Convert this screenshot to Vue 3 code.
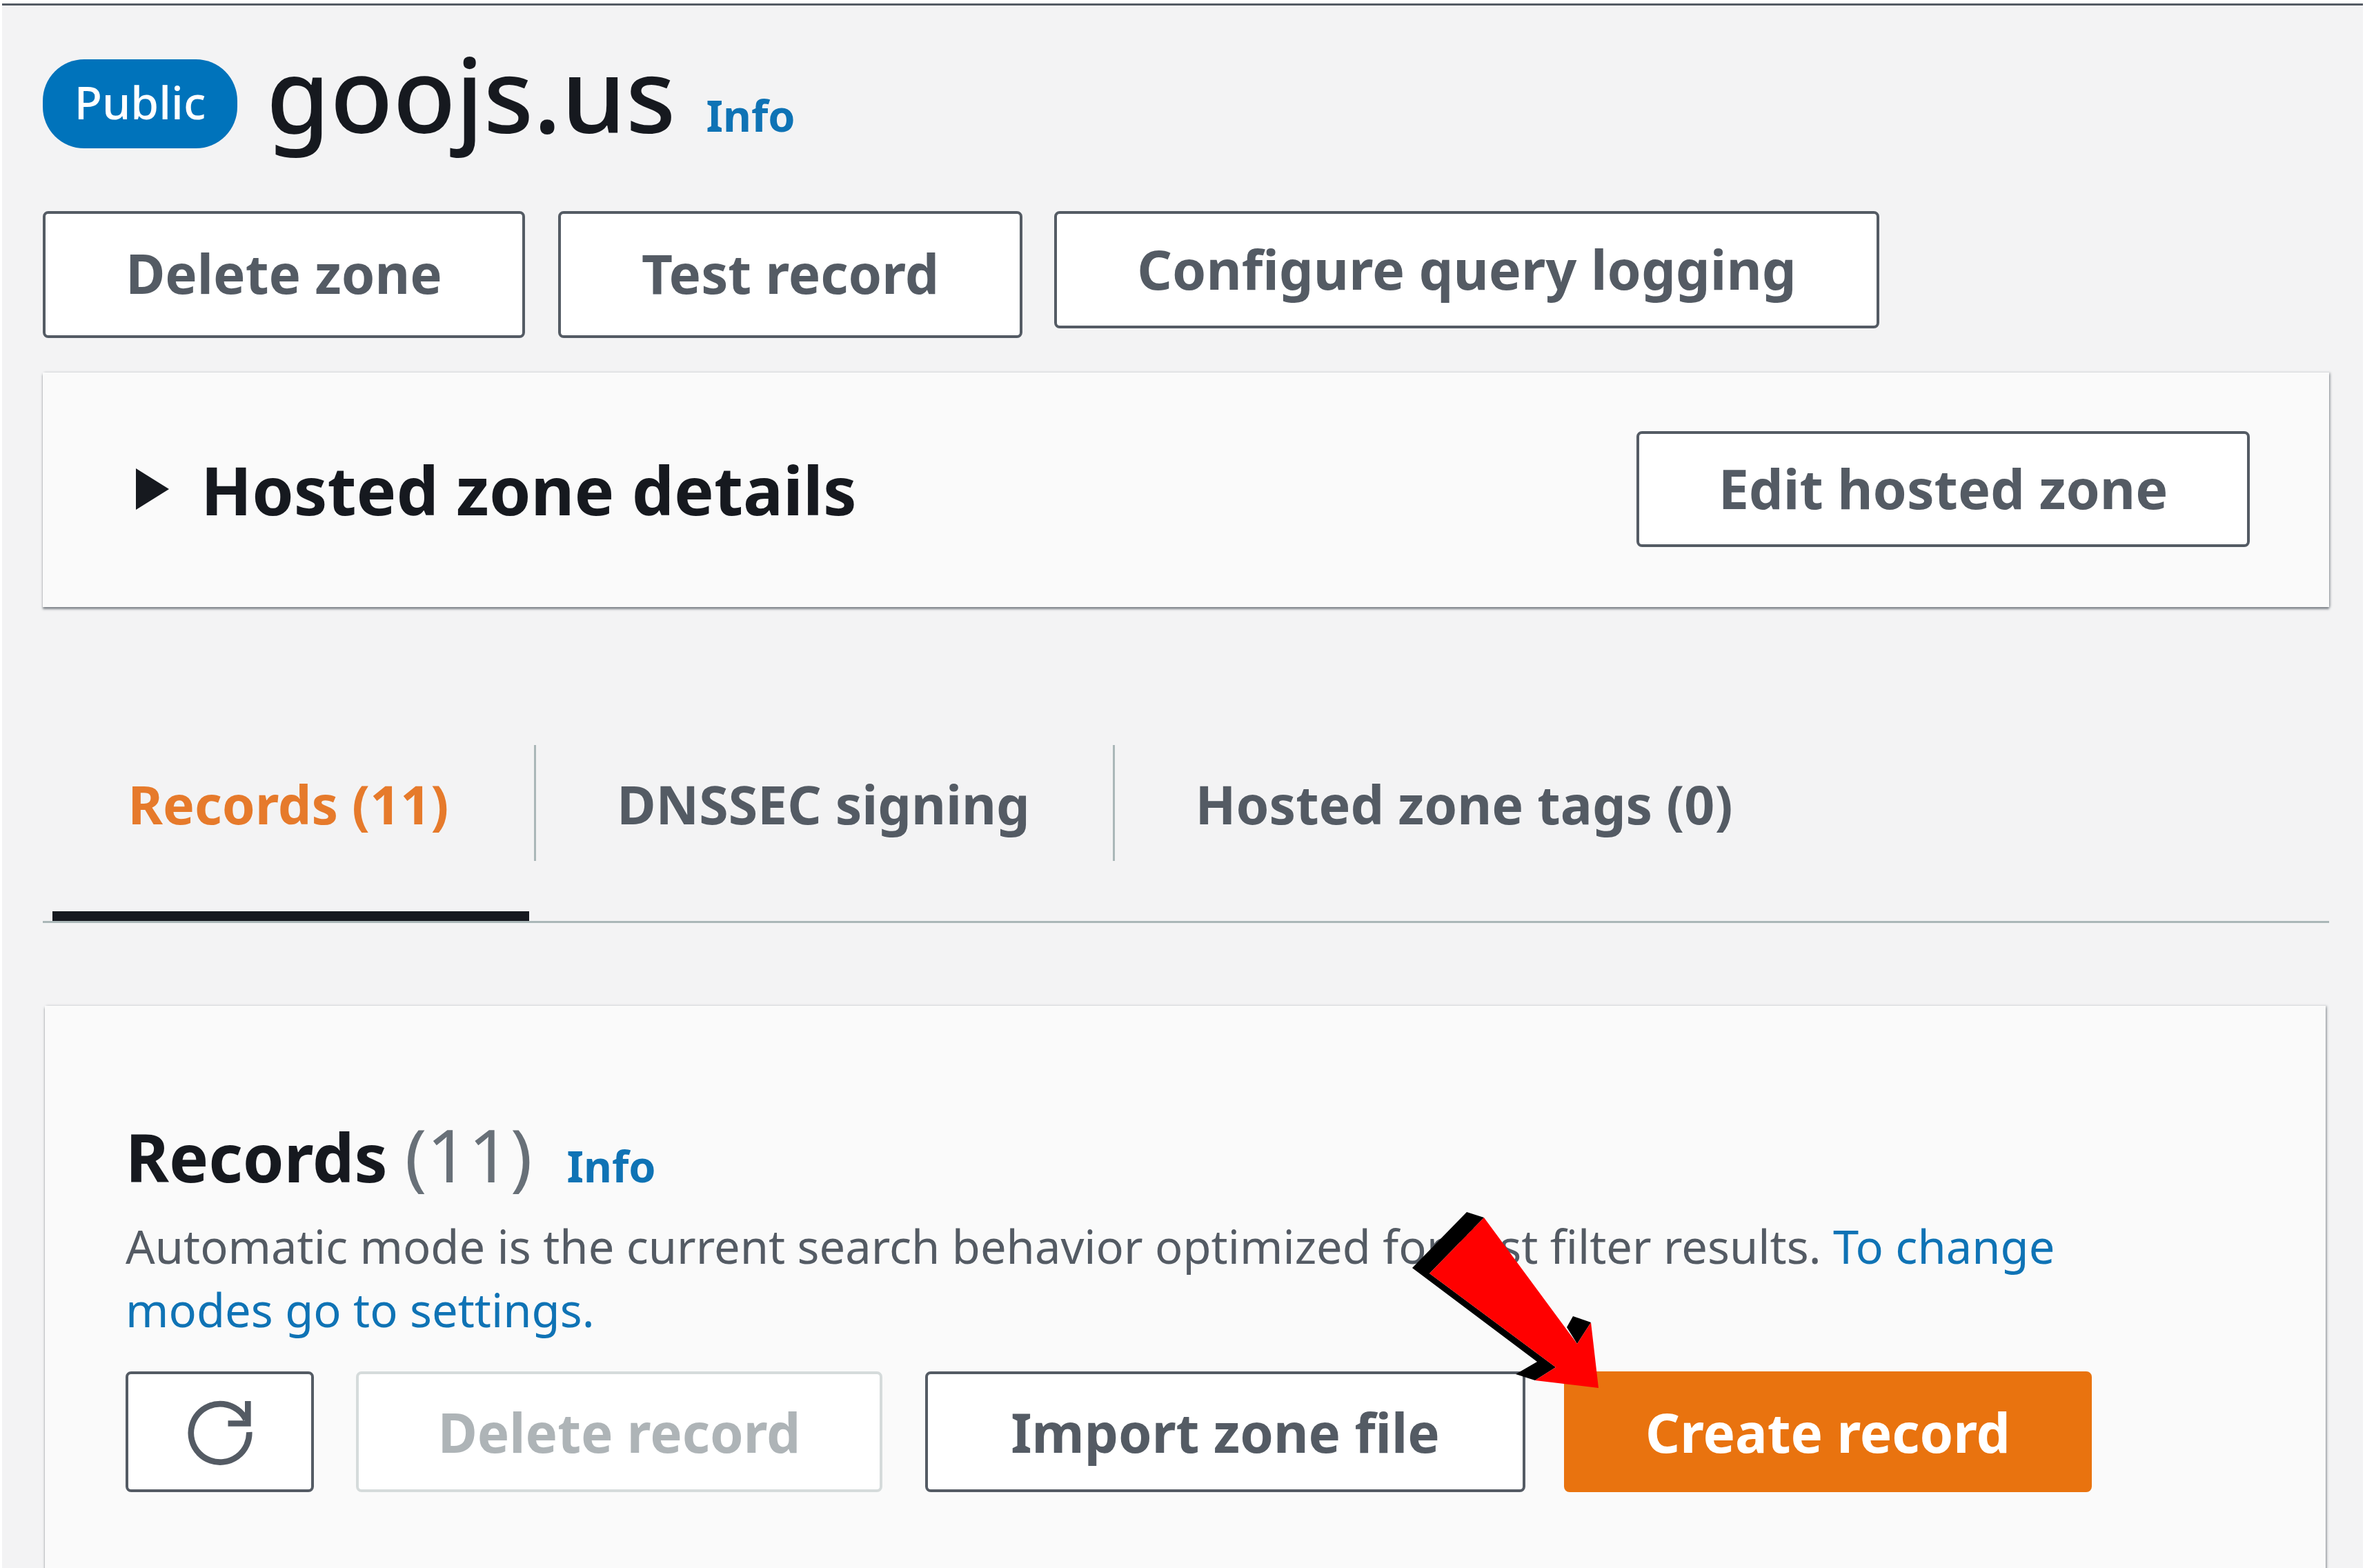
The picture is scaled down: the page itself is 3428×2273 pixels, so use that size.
<script setup>
const tabs = [
  { label: 'Records (11)', active: true },
  { label: 'DNSSEC signing' },
  { label: 'Hosted zone tags (0)' }
]
</script>

<template>
  <main class="page">
    <header class="head">
      <span class="badge">Public</span>
      <h1>goojs.us</h1>
      <a class="info info-top">Info</a>
    </header>

    <div class="zone-actions">
      <button class="btn btn-delete-zone">Delete zone</button>
      <button class="btn btn-test">Test record</button>
      <button class="btn btn-logging">Configure query logging</button>
    </div>

    <section class="card details">
      <div class="details-title">
        <span class="caret"></span>
        <h2>Hosted zone details</h2>
      </div>
      <button class="btn btn-edit">Edit hosted zone</button>
    </section>

    <nav class="tabs">
      <div v-for="tab in tabs" :key="tab.label" :class="['tab', { active: tab.active }]">
        <span class="tab-label">{{ tab.label }}</span>
      </div>
    </nav>

    <section class="card records">
      <div class="records-title">
        <h2>Records <span class="count">(11)</span></h2>
        <a class="info info-records">Info</a>
      </div>
      <p class="desc">
        Automatic mode is the current search behavior optimized for fast filter results.
        <a>To change modes go to settings.</a>
      </p>
      <div class="record-actions">
        <button class="btn btn-refresh" aria-label="Refresh">
          <svg viewBox="0 0 100 100" width="96" height="96">
            <path d="M89 31A44 44 0 1 0 94 50" fill="none" stroke="#545b64" stroke-width="9" />
            <path d="M92 3V37H62" fill="none" stroke="#545b64" stroke-width="9" />
          </svg>
        </button>
        <button class="btn btn-disabled">Delete record</button>
        <button class="btn btn-import">Import zone file</button>
        <button class="btn btn-primary">Create record</button>
      </div>
    </section>

    <svg class="arrow" viewBox="0 0 3428 2273" width="3428" height="2273">
      <polygon points="2126,1757 2151,1765 2072,1846 2255,1982 2225,2001 2197,1992 2228,1974 2047,1838" fill="#000" />
      <polygon points="2280,1908 2306,1917 2286,1948 2271,1924" fill="#000" />
      <polygon points="2151,1765 2286,1948 2306,1917 2317,2012 2225,2001 2255,1982 2072,1846" fill="#f00" />
    </svg>
  </main>
</template>

<style>
html, body {
  margin: 0;
  background: #fff;
}
</style>

<style scoped>
.page {
  position: relative;
  box-sizing: border-box;
  height: 2268px;
  overflow: hidden;
  margin: 5px 3px 0;
  padding: 78px 49px 0 59px;
  background: #f3f3f4;
  border-top: 3px solid #545b64;
  font-family: "Noto Sans", "Open Sans", sans-serif;
  color: #16191f;
}

h1, h2, p {
  margin: 0;
}

a {
  color: #0f73b5;
}

.head {
  display: flex;
  align-items: center;
  height: 129px;
}

.badge {
  display: flex;
  align-items: center;
  justify-content: center;
  width: 282px;
  height: 129px;
  padding-bottom: 8px;
  box-sizing: border-box;
  border-radius: 60px;
  background: #0073bb;
  color: #fff;
  font-size: 66px;
  font-weight: 500;
}

h1 {
  margin-left: 42px;
  padding-bottom: 30px;
  font-size: 149px;
  font-weight: 500;
  line-height: 129px;
}

.info {
  font-weight: 700;
  font-size: 63px;
}

.info-top {
  margin: 32px 0 0 44px;
}

.zone-actions {
  display: flex;
  align-items: flex-start;
  gap: 48px;
  margin-top: 91px;
}

.btn {
  box-sizing: border-box;
  display: flex;
  align-items: center;
  justify-content: center;
  padding: 0 0 4px;
  background: #fff;
  border: 4px solid #545b64;
  border-radius: 8px;
  color: #545b64;
  font: 700 78px "Noto Sans", "Open Sans", sans-serif;
}

.btn-delete-zone {
  width: 699px;
  height: 184px;
}

.btn-test {
  width: 673px;
  height: 184px;
}

.btn-logging {
  width: 1196px;
  height: 170px;
  margin-left: -2px;
  font-size: 79px;
}

.card {
  background: #fafafa;
  box-shadow: 0 3px 3px rgba(84, 91, 100, 0.7), 2px 0 3px rgba(84, 91, 100, 0.35);
}

.details {
  display: flex;
  align-items: center;
  justify-content: space-between;
  box-sizing: border-box;
  height: 340px;
  margin-top: 50px;
  padding: 0 115px 2px 135px;
}

.details-title {
  display: flex;
  align-items: center;
  gap: 46px;
}

.caret {
  width: 0;
  height: 0;
  border-left: 48px solid #16191f;
  border-top: 30px solid transparent;
  border-bottom: 30px solid transparent;
}

.details h2 {
  font-size: 97px;
  font-weight: 700;
}

.btn-edit {
  width: 889px;
  height: 168px;
  font-size: 79px;
}

.tabs {
  display: flex;
  height: 255px;
  margin-top: 200px;
  border-bottom: 3px solid #aab7b8;
}

.tab {
  position: relative;
  box-sizing: border-box;
  height: 255px;
  padding: 0 0 84px;
  display: flex;
  align-items: center;
  justify-content: center;
  font-size: 77px;
  font-weight: 700;
  color: #545b64;
}

.tab:nth-child(1) {
  width: 712px;
}

.tab:nth-child(2) {
  width: 839px;
}

.tab:nth-child(3) {
  width: 1018px;
}

.tab.active {
  color: #e67a2b;
}

.tab.active::after {
  content: "";
  position: absolute;
  left: 14px;
  right: 7px;
  bottom: 0;
  height: 14px;
  background: #16191f;
}

.tab:nth-child(2)::before,
.tab:nth-child(3)::before {
  content: "";
  position: absolute;
  left: 0;
  top: 0;
  height: 168px;
  width: 3px;
  background: #aab7b8;
}

.records {
  box-sizing: border-box;
  height: 900px;
  margin: 120px 5px 0 3px;
  padding: 143px 122px 0 117px;
}

.records-title {
  display: flex;
  align-items: baseline;
  gap: 50px;
}

.records h2 {
  font-size: 96px;
  font-weight: 700;
}

.count {
  font-size: 106px;
  font-weight: 400;
  color: #687078;
}

.desc {
  max-width: 2900px;
  margin-top: 16px;
  font-size: 66.85px;
  line-height: 92px;
  color: #545b64;
}

.record-actions {
  display: flex;
  margin-top: 43px;
  height: 175px;
}

.record-actions .btn {
  height: 175px;
  padding: 0;
}

.btn-refresh {
  width: 273px;
  margin-right: 61px;
}

.btn-disabled {
  width: 763px;
  margin-right: 62px;
  color: #aeb4b7 !important;
  border-color: #d5dbdb !important;
}

.btn-import {
  width: 870px;
  margin-right: 56px;
}

.btn-primary {
  width: 765px;
  background: #e9730f;
  border-color: #e9730f !important;
  color: #fff !important;
}

.arrow {
  position: absolute;
  left: -3px;
  top: -8px;
  pointer-events: none;
}
</style>
